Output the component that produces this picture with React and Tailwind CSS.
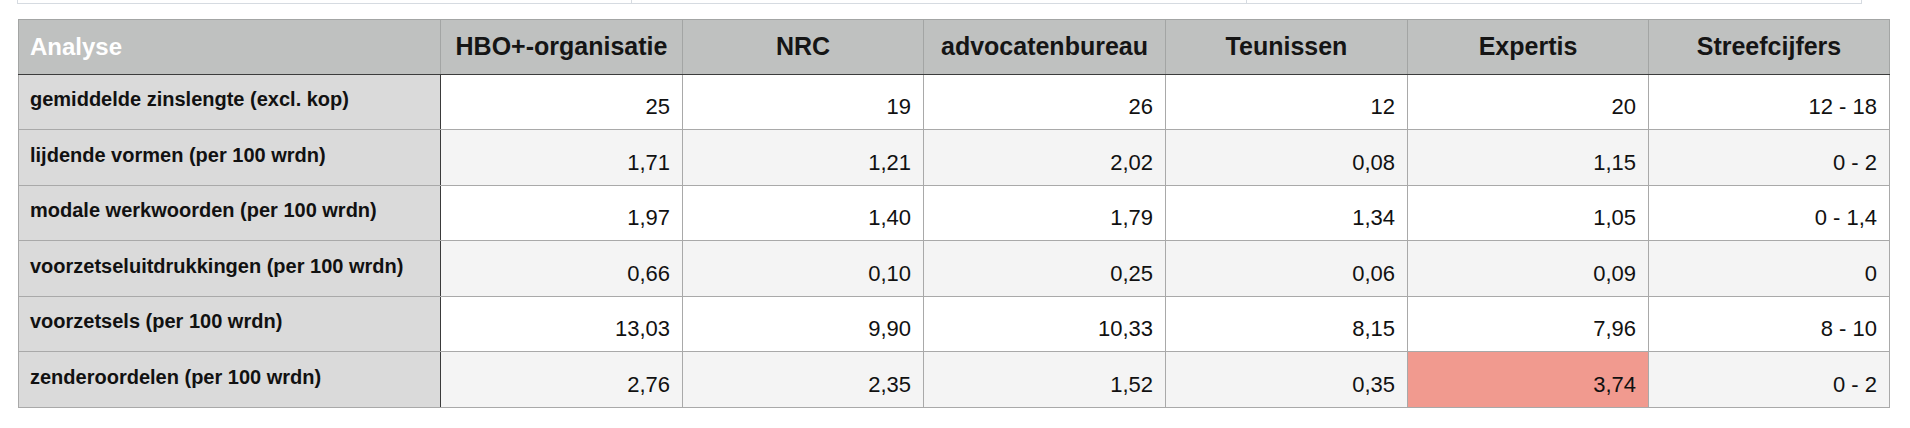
const kolommen = ['HBO+-organisatie', 'NRC', 'advocatenbureau', 'Teunissen', 'Expertis', 'Streefcijfers']

const rijen = [
  { label: 'gemiddelde zinslengte (excl. kop)', waarden: ['25', '19', '26', '12', '20', '12 - 18'] },
  { label: 'lijdende vormen (per 100 wrdn)', waarden: ['1,71', '1,21', '2,02', '0,08', '1,15', '0 - 2'] },
  { label: 'modale werkwoorden (per 100 wrdn)', waarden: ['1,97', '1,40', '1,79', '1,34', '1,05', '0 - 1,4'] },
  { label: 'voorzetseluitdrukkingen (per 100 wrdn)', waarden: ['0,66', '0,10', '0,25', '0,06', '0,09', '0'] },
  { label: 'voorzetsels (per 100 wrdn)', waarden: ['13,03', '9,90', '10,33', '8,15', '7,96', '8 - 10'] },
  { label: 'zenderoordelen (per 100 wrdn)', waarden: ['2,76', '2,35', '1,52', '0,35', '3,74', '0 - 2'], fout: 4 },
]

const breedtes = ['w-[422px]', 'w-[242px]', 'w-[241px]', 'w-[242px]', 'w-[242px]', 'w-[241px]', 'w-[241px]']

export default function App() {
  return (
    <div className="min-h-[428px] bg-white pl-[17px] pr-[21px] font-['Liberation_Sans',Arial,sans-serif] text-[#111]">
      {/* onderkant van de vorige tabel */}
      <div className="grid h-[4px] w-[1845px] grid-cols-3 border-x border-b border-[#d6dbe1]">
        <div className="border-r border-[#d6dbe1]" />
        <div className="border-r border-[#d6dbe1]" />
        <div />
      </div>

      <table className="mt-[15px] ml-px w-[1871px] table-fixed border-collapse">
        <colgroup>
          {breedtes.map((b, i) => (
            <col key={i} className={b} />
          ))}
        </colgroup>
        <thead>
          <tr className="h-[55px] bg-[#bfc1c0]">
            <th className="border border-[#a3a5a4] border-b-[#3c3c3c] pl-[11px] text-left text-[24px] font-bold text-white">
              Analyse
            </th>
            {kolommen.map((k) => (
              <th key={k} className="border border-[#a3a5a4] border-b-[#3c3c3c] text-center text-[25px] font-bold text-[#151515]">
                {k}
              </th>
            ))}
          </tr>
        </thead>
        <tbody>
          {rijen.map((r, ri) => (
            <tr key={r.label} className={ri % 2 === 0 ? 'h-[55px] bg-white' : 'h-[56px] bg-[#f4f4f4]'}>
              <td className="border border-[#a9a9a9] border-r-[#3a3a3a] bg-[#dadada] pt-[2px] pl-[11px] pb-[8px] text-left align-middle text-[20px] font-bold">
                {r.label}
              </td>
              {r.waarden.map((w, wi) => (
                <td
                  key={wi}
                  className={
                    'border border-[#a9a9a9] pr-[12px] pt-[9px] text-right align-middle text-[22px] ' +
                    (r.fout === wi ? 'bg-[#f19a8f]' : '')
                  }
                >
                  {w}
                </td>
              ))}
            </tr>
          ))}
        </tbody>
      </table>
    </div>
  )
}
